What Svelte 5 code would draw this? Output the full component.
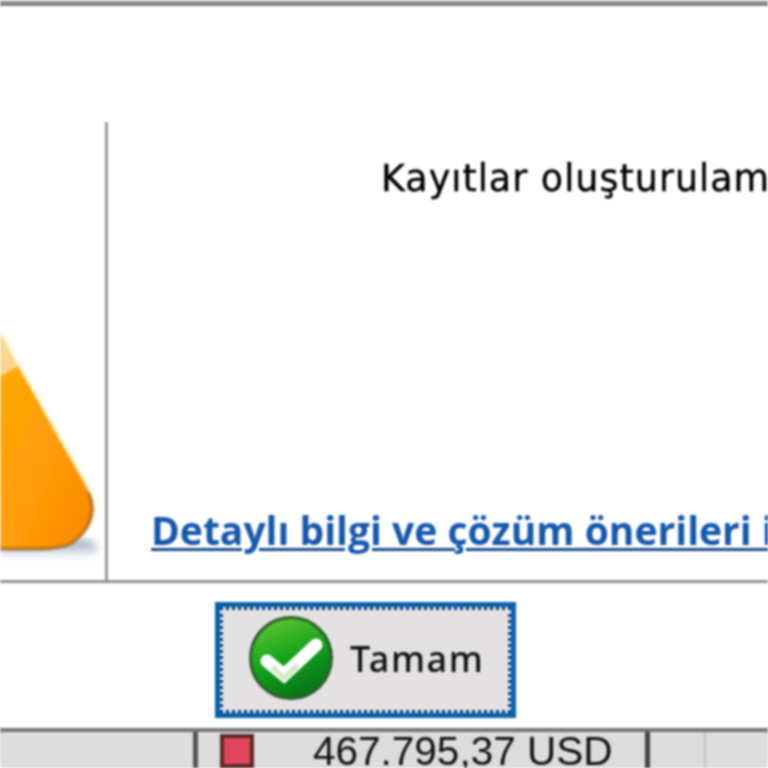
<script>
  const title = 'Kayıtlar oluşturulamadı';
  const link = 'Detaylı bilgi ve çözüm önerileri için';
</script>

<div class="page">
  <div class="top-edge"></div>
  <div class="dialog">
    <div class="spacer"></div>
    <div class="panel">
      <div class="icon-col">
        <svg width="105" height="458" viewBox="0 122 105 458" aria-hidden="true">
          <defs>
            <linearGradient id="fl" x1="0" y1="0" x2="1" y2="0.8">
              <stop offset="0" stop-color="#ffa805" />
              <stop offset="0.55" stop-color="#ff9c08" />
              <stop offset="1" stop-color="#fa8a00" />
            </linearGradient>
            <linearGradient id="sh" x1="0" y1="0" x2="0" y2="1">
              <stop offset="0" stop-color="#76879f" />
              <stop offset="1" stop-color="#ffffff" stop-opacity="0" />
            </linearGradient>
            <filter id="b1"><feGaussianBlur stdDeviation="0.8" /></filter>
            <filter id="b3"><feGaussianBlur stdDeviation="4" /></filter>
          </defs>
          <path d="M0 540 H84 Q100 542 98 552 Q70 566 0 562 Z" fill="url(#sh)" filter="url(#b3)" />
          <path d="M0 330 L20 368 L94 498 V515 L70 540 L0 540 Z" fill="#fff3c4" filter="url(#b3)" />
          <g filter="url(#b1)">
            <path d="M0 333 L18 366 L0 376 Z" fill="#f8d68c" />
            <path d="M0 376 L18 366 L87 488 Q93 500 92 512 Q90 530 72 543 Q60 549 40 549 H0 Z" fill="url(#fl)" />
            <path d="M88 492 Q93 502 92 512 Q90 530 72 543 Q60 549 40 549 H0" fill="none" stroke="#8f5a14" stroke-width="2.5" />
          </g>
        </svg>
      </div>
      <div class="content">
        <p class="title">{title}</p>
        <a class="link" href="#top">{link}</a>
      </div>
    </div>
    <div class="actions">
      <button class="ok" type="button">
        <svg class="check" width="86" height="86" viewBox="0 0 86 86" aria-hidden="true">
          <defs>
            <linearGradient id="gr" x1="0.3" y1="0" x2="0.7" y2="1">
              <stop offset="0" stop-color="#5cc62f" />
              <stop offset="0.5" stop-color="#12a01a" />
              <stop offset="1" stop-color="#076f18" />
            </linearGradient>
          </defs>
          <circle cx="43" cy="43" r="40.5" fill="url(#gr)" stroke="#2f5e2f" stroke-width="3" />
          <path d="M19 46 L36 60 L68 30" fill="none" stroke="#fff" stroke-width="13" stroke-linejoin="miter" stroke-linecap="round" />
          <path d="M24 52 L36 63 L50 50" fill="none" stroke="#cfe8c8" stroke-width="5" />
        </svg>
        <span>Tamam</span>
      </button>
    </div>
  </div>
  <div class="status">
    <div class="cell amount">
      <span class="marker"></span>
      <span class="value">467.795,37 USD</span>
    </div>
    <div class="cell empty"></div>
  </div>
</div>

<style>
  :global(body) { margin: 0; background: #fff; }
  .page {
    width: 768px;
    height: 768px;
    display: flex;
    flex-direction: column;
    overflow: hidden;
    filter: blur(0.8px);
    font-family: "Open Sans", "Noto Sans", sans-serif;
  }
  .top-edge {
    height: 6px;
    flex: none;
    background: linear-gradient(#d4d4d4, #6e6e6e 70%, #9a9a9a);
  }
  .dialog { flex: none; height: 722px; display: flex; flex-direction: column; background: #fff; }
  .spacer { height: 116px; flex: none; }
  .panel {
    height: 458px;
    flex: none;
    display: flex;
    border-bottom: 3px solid #929292;
    box-sizing: content-box;
  }
  .icon-col {
    width: 105px;
    flex: none;
    border-right: 3px solid #9a9a9a;
    overflow: hidden;
  }
  .icon-col svg { display: block; }
  .content {
    flex: 1;
    min-width: 0;
    display: flex;
    flex-direction: column;
    justify-content: space-between;
    white-space: nowrap;
    overflow: hidden;
  }
  .title {
    margin: 27px 0 0 273px;
    font-family: "DejaVu Sans", sans-serif;
    font-size: 36.5px;
    line-height: 60px;
    letter-spacing: 1px;
    color: #000;
    -webkit-text-stroke: 0.4px #000;
  }
  .link {
    margin: 0 0 22px 43px;
    font-size: 39px;
    line-height: 56px;
    font-weight: 700;
    letter-spacing: 0;
    color: #1559ad;
    text-decoration: underline;
    text-decoration-color: #1c4f8e;
    text-decoration-thickness: 3px;
    text-underline-offset: 3px;
  }
  .actions { flex: 1; display: flex; align-items: flex-start; padding: 19px 0 0 215px; }
  .ok {
    width: 301px;
    height: 116px;
    box-sizing: border-box;
    padding: 0 0 4px 28px;
    display: flex;
    align-items: center;
    gap: 16px;
    background: #e3e1e1;
    border: 5px solid #0a62ac;
    outline: 3px dotted #0b3f83;
    outline-offset: -8px;
    font-family: "Noto Sans", "Open Sans", sans-serif;
    font-size: 36px;
    font-weight: 500;
    color: #111;
    letter-spacing: 1.5px;
  }
  .check { flex: none; }
  .status {
    flex: 1;
    display: flex;
    align-items: stretch;
    background: #dcdcdc;
    border-top: 4px solid #777;
    box-sizing: border-box;
    padding-left: 193px;
    font-family: "Liberation Sans", Arial, sans-serif;
    overflow: hidden;
  }
  .cell { display: flex; align-items: center; }
  .amount {
    width: 457px;
    flex: none;
    box-sizing: border-box;
    border-left: 5px solid #555;
    border-right: 5px solid #444;
    padding-left: 22px;
    gap: 59px;
    white-space: nowrap;
  }
  .marker {
    width: 26px;
    height: 26px;
    flex: none;
    background: #e0455a;
    border: 4px solid #5a2a2a;
    margin-top: 2px;
  }
  .value { font-size: 40.5px; line-height: 36px; color: #111; margin-top: 2px; }
  .empty { width: 54px; border-right: 2px solid #c0c0c0; }
</style>
